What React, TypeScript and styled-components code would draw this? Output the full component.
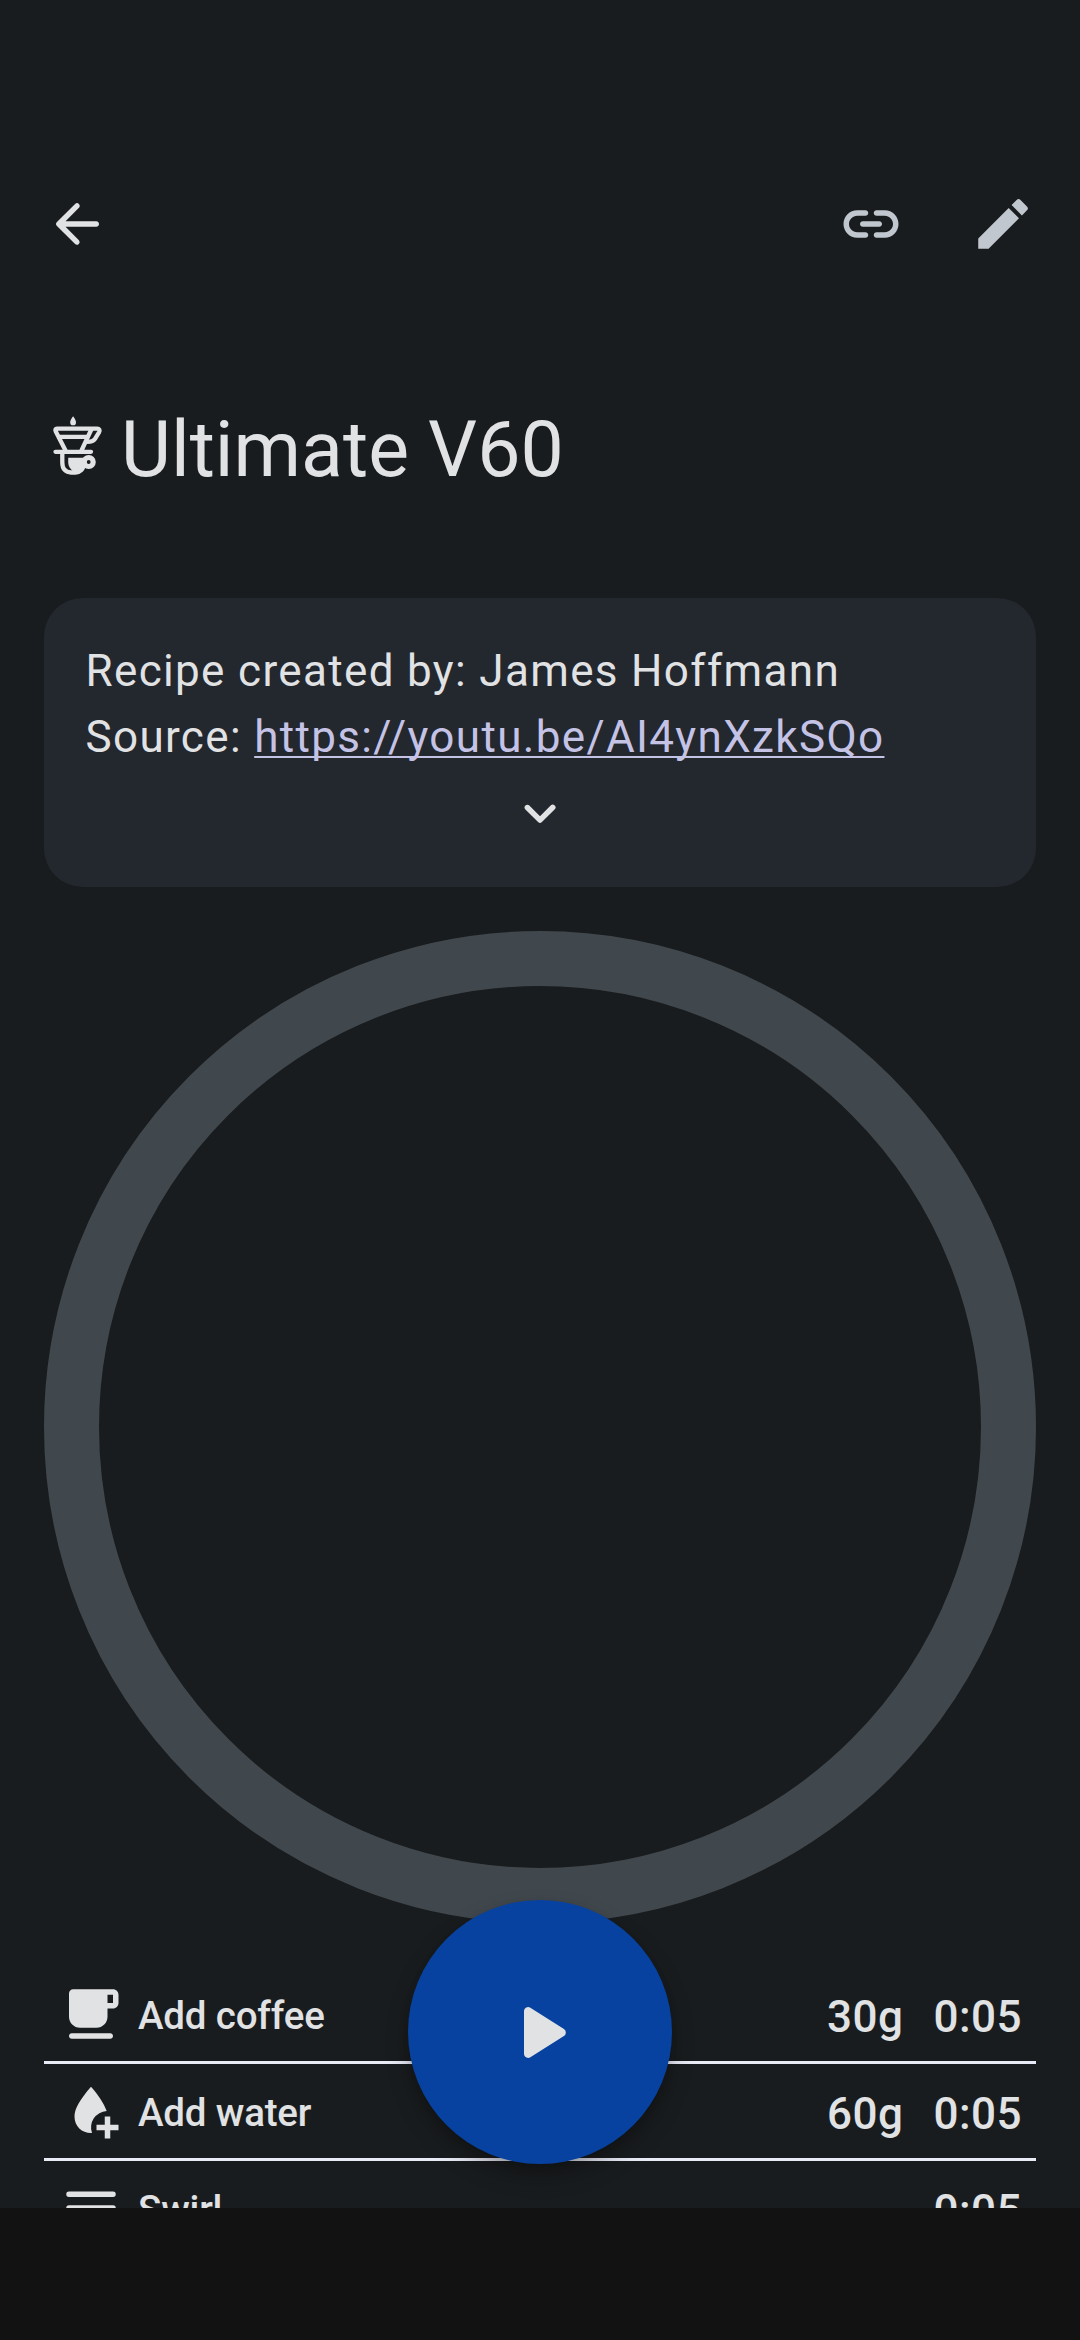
import React from "react";
import styled, { createGlobalStyle } from "styled-components";

const Global = createGlobalStyle`
  * { box-sizing: border-box; }
  body { margin: 0; background: #191c1e; }
`;

const Screen = styled.div`
  width: 1080px;
  height: 2340px;
  display: flex;
  flex-direction: column;
  overflow: hidden;
  background: #191c1e;
  color: #e1e2e4;
  font-family: Roboto, "Noto Sans", sans-serif;
`;

const Viewport = styled.main`
  position: relative;
  height: 2208px;
  padding-top: 136px;
  overflow: hidden;
`;

const AppBar = styled.header`
  height: 176px;
  padding: 0 11px;
  display: flex;
  align-items: center;
  justify-content: space-between;
`;

const Actions = styled.div`
  display: flex;
`;

const IconButton = styled.button<{ $muted?: boolean }>`
  width: 132px;
  height: 132px;
  padding: 0;
  border: 0;
  background: none;
  display: grid;
  place-items: center;
  color: ${(p) => (p.$muted ? "#c1c7ce" : "#e1e2e4")};
`;

const Icon = styled.svg<{ $size?: number }>`
  display: block;
  flex: none;
  width: ${(p) => p.$size ?? 66}px;
  height: ${(p) => p.$size ?? 66}px;
  fill: currentColor;
`;

const TitleRow = styled.div`
  height: 242px;
  padding: 89px 44px 0;
  display: flex;
  align-items: flex-start;
`;

const TitleIcon = styled(Icon)`
  margin: 13px 11px 0 0;
`;

const Title = styled.h1`
  margin: 0;
  font-size: 77px;
  line-height: 99px;
  font-weight: 400;
`;

const Content = styled.div`
  padding: 44px 44px 0;
  display: flex;
  flex-direction: column;
  gap: 44px;
`;

const Card = styled.section`
  height: 289px;
  padding: 40px 41.5px 0;
  border-radius: 38.5px;
  background: #23272e;
  display: flex;
  flex-direction: column;
`;

const Description = styled.p`
  margin: 0;
  font-size: 44px;
  line-height: 66px;
  letter-spacing: 1.345px;
`;

const SourceLink = styled.a`
  color: #c4c3e6;
  text-decoration: underline;
  text-decoration-thickness: 2.4px;
  text-decoration-skip-ink: none;
  text-underline-offset: 4px;
`;

const Expand = styled.div`
  margin-top: 10px;
  display: flex;
  justify-content: center;
`;

const TimerRing = styled.div`
  width: 992px;
  height: 992px;
  border: 55px solid #41484d;
  border-radius: 50%;
`;

const Steps = styled.ul`
  margin: 0;
  padding: 0;
  list-style: none;
`;

const Step = styled.li`
  height: 97px;
  padding: 0 14px;
  border-bottom: 3px solid #e8eaf6;
  display: flex;
  align-items: center;
`;

const StepName = styled.span`
  flex: 1;
  margin-left: 14px;
  padding-top: 2px;
  font-size: 38.5px;
  line-height: 55px;
  font-weight: 500;
  letter-spacing: -0.18px;
`;

const Amount = styled.span`
  padding-top: 6px;
  font-size: 44px;
  line-height: 66px;
  font-weight: 500;
  letter-spacing: 0.5px;
`;

const Duration = styled(Amount)`
  margin-left: 30px;
`;

const PlayButton = styled.button`
  position: absolute;
  left: 408px;
  bottom: 44px;
  width: 264px;
  height: 264px;
  padding: 0;
  border: 0;
  border-radius: 50%;
  background: #0842a0;
  color: #e1e2e4;
  display: grid;
  place-items: center;
  box-shadow: 0 12px 24px -2px rgba(0, 0, 0, 0.32), 0 2px 6px rgba(0, 0, 0, 0.1);
`;

const NavigationBar = styled.footer`
  height: 132px;
  background: #121212;
`;

const CoffeeIcon = () => (
  <Icon viewBox="0 0 24 24">
    <path
      fillRule="evenodd"
      d="M20 3H5.500C4.700 3 4 3.700 4 4.500V13c0 2.210 1.790 4 4 4h6c2.210 0 4-1.790 4-4v-3h2c1.110 0 2-.89 2-2V5c0-1.110-.89-2-2-2zm0 5h-2V5h2v3zM5 19h14c.55 0 1 .45 1 1s-.45 1-1 1H5c-.55 0-1-.45-1-1s.45-1 1-1z"
    />
  </Icon>
);

const WaterIcon = () => (
  <Icon viewBox="0 0 24 24">
    <path d="M12 3.200C8 7.800 6 11.200 6 14c0 3.600 2.700 6 6 6h.36A6 6 0 0 1 17.700 12C16.700 9.300 14.900 6.500 12 3.200z" />
    <path d="M17 14h2v3h3v2h-3v3h-2v-3h-3v-2h3z" />
  </Icon>
);

const SwirlIcon = () => (
  <Icon viewBox="0 0 24 24">
    <path d="M4 6h16a1 1 0 0 1 0 2H4a1 1 0 0 1 0-2zM4 11h16a1 1 0 0 1 0 2H4a1 1 0 0 1 0-2zM4 16h16a1 1 0 0 1 0 2H4a1 1 0 0 1 0-2z" />
  </Icon>
);

const steps = [
  { name: "Add coffee", amount: "30g", time: "0:05", icon: <CoffeeIcon /> },
  { name: "Add water", amount: "60g", time: "0:05", icon: <WaterIcon /> },
  { name: "Swirl", amount: "", time: "0:05", icon: <SwirlIcon /> },
];

export default function App() {
  return (
    <Screen>
      <Global />
      <Viewport>
        <AppBar>
          <IconButton aria-label="Back">
            <Icon viewBox="0 0 24 24">
              <path d="M19 11H7.830l4.880-4.880c.39-.39.39-1.030 0-1.420a1 1 0 0 0-1.410 0l-6.590 6.590a1 1 0 0 0 0 1.410l6.590 6.590a1 1 0 0 0 1.410-1.410L7.830 13H19c.55 0 1-.45 1-1s-.45-1-1-1z" />
            </Icon>
          </IconButton>
          <Actions>
            <IconButton $muted aria-label="Link">
              <Icon viewBox="0 0 24 24">
                <path d="M17 7h-3c-.55 0-1 .45-1 1s.45 1 1 1h3c1.650 0 3 1.350 3 3s-1.350 3-3 3h-3c-.55 0-1 .45-1 1s.45 1 1 1h3c2.760 0 5-2.240 5-5s-2.240-5-5-5zm-9 5c0 .55.45 1 1 1h6c.55 0 1-.45 1-1s-.45-1-1-1H9c-.55 0-1 .45-1 1zm2 3H7c-1.650 0-3-1.350-3-3s1.350-3 3-3h3c.55 0 1-.45 1-1s-.45-1-1-1H7c-2.760 0-5 2.240-5 5s2.240 5 5 5h3c.55 0 1-.45 1-1s-.45-1-1-1z" />
              </Icon>
            </IconButton>
            <IconButton $muted aria-label="Edit">
              <Icon viewBox="0 0 24 24">
                <path d="M3 17.250V21h3.750L17.810 9.940l-3.750-3.750L3 17.250zM20.710 7.040a1 1 0 0 0 0-1.410l-2.340-2.340a1 1 0 0 0-1.410 0l-1.830 1.830 3.750 3.750 1.830-1.830z" />
              </Icon>
            </IconButton>
          </Actions>
        </AppBar>
        <TitleRow>
          <TitleIcon viewBox="0 0 66 66">
            <path d="M29.100 2.300c1.900 2.700 2.900 4.500 2.900 6.100a2.900 2.900 0 0 1-5.800 0c0-1.600 1-3.400 2.900-6.100z" />
            <g fill="none" stroke="currentColor" strokeWidth="4.300" strokeLinejoin="round" strokeLinecap="round">
              <path d="M21.500 36.500L11.800 17.500C10.900 15.800 11.500 14.700 13 14.700H53C55.600 14.700 56.100 16.400 55 18.300L51 24.800C49.500 27.200 48 27.800 43.500 27.800" />
              <path d="M47.300 15.500L37.500 36.500M15.500 22.800H43M11.500 37.800H47" />
              <path d="M18.300 39V48.500C18.300 55.500 22 58.500 27 58.500H31.500C36 58.500 39.500 55.500 39.500 50" />
            </g>
            <circle cx="44.700" cy="48" r="4.500" fill="none" stroke="currentColor" strokeWidth="5.200" />
            <path d="M24.200 43.700H40.500V55L36 58H30C26.500 55.500 24.200 52.500 24.200 48.500z" />
          </TitleIcon>
          <Title>Ultimate V60</Title>
        </TitleRow>
        <Content>
          <Card>
            <Description>
              Recipe created by: James Hoffmann
              <br />
              Source: <SourceLink>https://youtu.be/AI4ynXzkSQo</SourceLink>
            </Description>
            <Expand>
              <Icon viewBox="0 0 24 24">
                <path d="M8.120 9.290 12 13.170l3.880-3.880a1 1 0 1 1 1.410 1.410l-4.590 4.590a1 1 0 0 1-1.410 0L6.700 10.700a1 1 0 0 1 0-1.410c.39-.38 1.030-.39 1.420 0z" />
              </Icon>
            </Expand>
          </Card>
          <TimerRing />
          <Steps>
            {steps.map((s) => (
              <Step key={s.name}>
                {s.icon}
                <StepName>{s.name}</StepName>
                <Amount>{s.amount}</Amount>
                <Duration>{s.time}</Duration>
              </Step>
            ))}
          </Steps>
        </Content>
        <PlayButton aria-label="Start">
          <Icon viewBox="0 0 24 24" $size={99}>
            <path d="M8 6.820v10.360c0 .79.87 1.270 1.540.84l8.140-5.180a1 1 0 0 0 0-1.690L9.540 5.980A.998.998 0 0 0 8 6.820z" />
          </Icon>
        </PlayButton>
      </Viewport>
      <NavigationBar />
    </Screen>
  );
}
